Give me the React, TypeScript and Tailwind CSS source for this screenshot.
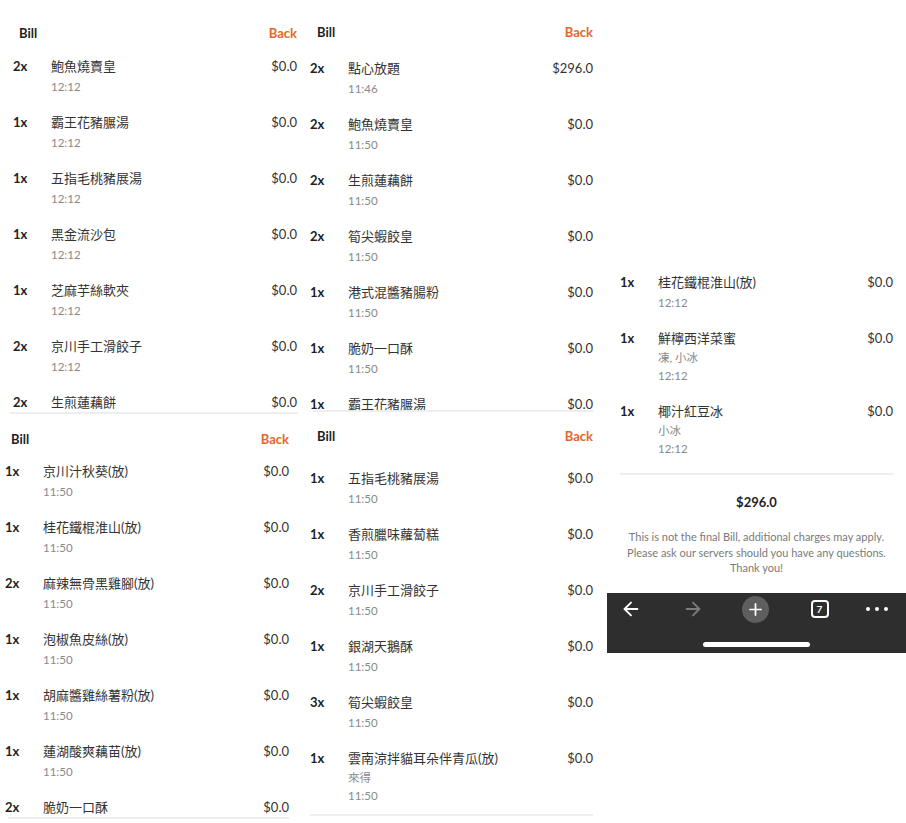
import React from "react";
import { ArrowLeft, ArrowRight, Plus } from "lucide-react";

type Item = { q: string; n: string; p: string; t: string; notes?: string };

const F = "font-['Lato','Noto_Sans_CJK_TC',sans-serif]";

function Row({ it }: { it: Item }) {
  return (
    <div className="flex items-start pb-[15px]">
      <div className="w-[38px] shrink-0 text-[13px] leading-[22px] font-bold text-[#1f1f1f]">{it.q}</div>
      <div className="flex-1 min-w-0">
        <div className="text-[13px] leading-[22px] text-[#333]">{it.n}</div>
        {it.notes && <div className="text-[11.5px] leading-[17px] text-[#8a8a8a]">{it.notes}</div>}
        <div className="text-[11.5px] leading-[19px] text-[#8a8a8a]">{it.t}</div>
      </div>
      <div className="shrink-0 text-[13px] leading-[22px] text-[#333]">{it.p}</div>
    </div>
  );
}

function Header({ cls }: { cls: string }) {
  return (
    <div className={"flex justify-between text-[13px] leading-[20px] font-bold " + cls}>
      <span className="text-[#1f1f1f]">Bill</span>
      <span className="text-[#e4672d]">Back</span>
    </div>
  );
}

const mk = (q: string, n: string, t: string, p = "$0.0", notes?: string): Item => ({ q, n, p, t, notes });

const TL: Item[] = [
  mk("2x", "鮑魚燒賣皇", "12:12"),
  mk("1x", "霸王花豬𦟌湯", "12:12"),
  mk("1x", "五指毛桃豬展湯", "12:12"),
  mk("1x", "黑金流沙包", "12:12"),
  mk("1x", "芝麻芋絲軟夾", "12:12"),
  mk("2x", "京川手工滑餃子", "12:12"),
  mk("2x", "生煎蓮藕餅", "12:12"),
];
const TM: Item[] = [
  mk("2x", "點心放題", "11:46", "$296.0"),
  mk("2x", "鮑魚燒賣皇", "11:50"),
  mk("2x", "生煎蓮藕餅", "11:50"),
  mk("2x", "筍尖蝦餃皇", "11:50"),
  mk("1x", "港式混醬豬腸粉", "11:50"),
  mk("1x", "脆奶一口酥", "11:50"),
  mk("1x", "霸王花豬𦟌湯", "11:50"),
];
const BL: Item[] = [
  mk("1x", "京川汁秋葵(放)", "11:50"),
  mk("1x", "桂花鐵棍淮山(放)", "11:50"),
  mk("2x", "麻辣無骨黑雞腳(放)", "11:50"),
  mk("1x", "泡椒魚皮絲(放)", "11:50"),
  mk("1x", "胡麻醬雞絲薯粉(放)", "11:50"),
  mk("1x", "蓮湖酸爽藕苗(放)", "11:50"),
  mk("2x", "脆奶一口酥", "11:50"),
];
const BM: Item[] = [
  mk("1x", "五指毛桃豬展湯", "11:50"),
  mk("1x", "香煎臘味蘿蔔糕", "11:50"),
  mk("2x", "京川手工滑餃子", "11:50"),
  mk("1x", "銀湖天鵝酥", "11:50"),
  mk("3x", "筍尖蝦餃皇", "11:50"),
  mk("1x", "雲南涼拌貓耳朵伴青瓜(放)", "11:50", "$0.0", "來得"),
];
const RT: Item[] = [
  mk("1x", "桂花鐵棍淮山(放)", "12:12"),
  mk("1x", "鮮檸西洋菜蜜", "12:12", "$0.0", "凍, 小冰"),
  mk("1x", "椰汁紅豆冰", "12:12", "$0.0", "小冰"),
];

export default function App() {
  return (
    <div className={"relative w-[906px] h-[823px] overflow-hidden bg-white " + F}>
      {/* top-left */}
      <div className="absolute left-0 top-0 w-[306px] h-[414px] overflow-hidden bg-white pt-[23px]">
        <Header cls="pl-[19px] pr-[9px]" />
        <div className="mt-[12px] pl-[13px] pr-[9px]">
          {TL.map((it, i) => <Row key={i} it={it} />)}
        </div>
        <div className="absolute left-[10px] right-[8px] bottom-0 h-[2px] bg-[#eeeeee]" />
      </div>

      {/* top-middle */}
      <div className="absolute left-[305px] top-0 w-[300px] h-[412px] overflow-hidden bg-white pt-[22px]">
        <Header cls="pl-[12px] pr-[12px]" />
        <div className="mt-[15px] pl-[5px] pr-[12px]">
          {TM.map((it, i) => <Row key={i} it={it} />)}
        </div>
        <div className="absolute left-[8px] right-[12px] bottom-0 h-[2px] bg-[#eeeeee]" />
      </div>

      {/* bottom-left */}
      <div className="absolute left-0 top-[414px] w-[300px] h-[409px] overflow-hidden bg-white pt-[15px]">
        <Header cls="pl-[11px] pr-[11px]" />
        <div className="mt-[11px] pl-[5px] pr-[11px]">
          {BL.map((it, i) => <Row key={i} it={it} />)}
        </div>
        <div className="absolute left-[8px] right-[11px] top-[403px] h-[2px] bg-[#eeeeee]" />
      </div>

      {/* bottom-middle */}
      <div className="absolute left-[300px] top-[412px] w-[305px] h-[411px] overflow-hidden bg-white pt-[14px]">
        <Header cls="pl-[17px] pr-[12px]" />
        <div className="mt-[21px] pl-[10px] pr-[12px]">
          {BM.map((it, i) => <Row key={i} it={it} />)}
        </div>
        <div className="absolute left-[10px] right-[12px] top-[402px] h-[2px] bg-[#eeeeee]" />
      </div>

      {/* right */}
      <div className="absolute left-[607px] top-[240px] w-[299px] h-[413px] overflow-hidden bg-white pt-[31px] flex flex-col">
        <div className="pl-[13px] pr-[13px]">
          {RT.map((it, i) => <Row key={i} it={it} />)}
        </div>
        <div className="mx-[13px] h-[2px] bg-[#eeeeee]" />
        <div className="mt-[17px] text-center text-[13px] leading-[20px] font-bold text-[#1f1f1f]">$296.0</div>
        <div className="mt-[17px] text-center text-[11px] leading-[15.5px] text-[#7a7a7a]">
          <div>This is not the final Bill, additional charges may apply.</div>
          <div>Please ask our servers should you have any questions.</div>
          <div>Thank you!</div>
        </div>
        <div className="mt-auto h-[60px] bg-[#2e2e2e] flex flex-col">
          <div className="h-[32px] flex items-center justify-between pl-[12px] pr-[18px]">
            <div className="w-[24px] h-[24px] flex items-center justify-center">
              <ArrowLeft size={22} strokeWidth={2} color="#ffffff" />
            </div>
            <div className="w-[24px] h-[24px] flex items-center justify-center">
              <ArrowRight size={22} strokeWidth={2} color="#7b7b7b" />
            </div>
            <div className="w-[27px] h-[27px] rounded-full bg-[#5e5e5e] flex items-center justify-center">
              <Plus size={19} strokeWidth={2.2} color="#ffffff" />
            </div>
            <div className="w-[18px] h-[18px] ml-[4px] rounded-[4px] border-2 border-white flex items-center justify-center text-[10px] leading-none font-bold text-white">7</div>
            <div className="w-[22px] flex items-center justify-between">
              <span className="w-[4px] h-[4px] rounded-full bg-white" />
              <span className="w-[4px] h-[4px] rounded-full bg-white" />
              <span className="w-[4px] h-[4px] rounded-full bg-white" />
            </div>
          </div>
          <div className="flex-1 flex items-start justify-center pt-[17px]">
            <div className="w-[107px] h-[5px] rounded-full bg-white" />
          </div>
        </div>
      </div>
    </div>
  );
}
